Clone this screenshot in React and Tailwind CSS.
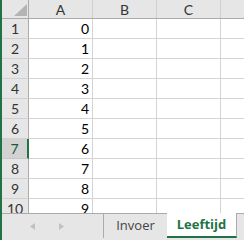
import React from 'react';

const cols = ['A', 'B', 'C', 'D'];
const rows = [0, 1, 2, 3, 4, 5, 6, 7, 8, 9];

const HeaderRow = () => (
  <div className="flex h-[19px] shrink-0 bg-[#e6e6e6] border-b border-[#ababab]">
    <div className="w-[27px] shrink-0 border-r border-[#ababab] relative">
      <svg className="absolute left-[12px] top-[4px]" width="13" height="12" viewBox="0 0 13 12">
        <polygon points="0,12 13,12 13,0" fill="#b4b4b4" />
      </svg>
    </div>
    {cols.map((c) => (
      <div
        key={c}
        className="w-[64px] shrink-0 border-r border-[#d0d0d0] flex items-center justify-center text-[14px] text-[#333]"
      >
        {c}
      </div>
    ))}
  </div>
);

const Row = ({ n, value, selected }) => (
  <div className="flex h-[20px] shrink-0">
    <div
      className={
        selected
          ? 'w-[27px] shrink-0 bg-[#d2d2d2] border-b border-[#c6c6c6] border-r-2 border-r-[#217346] flex items-center justify-center text-[14px] text-[#1e5a38]'
          : 'w-[27px] shrink-0 bg-[#e6e6e6] border-b border-[#d0d0d0] border-r border-r-[#ababab] flex items-center justify-center text-[14px] text-[#333]'
      }
    >
      {n}
    </div>
    <div className="w-[64px] shrink-0 border-r border-b border-[#d4d4d4] flex items-center justify-end pr-[3px] text-[14px] text-black">
      {value}
    </div>
    <div className="w-[64px] shrink-0 border-r border-b border-[#d4d4d4]" />
    <div className="w-[64px] shrink-0 border-r border-b border-[#d4d4d4]" />
    <div className="w-[64px] shrink-0 border-r border-b border-[#d4d4d4]" />
  </div>
);

const TabBar = () => (
  <div className="flex h-[27px] shrink-0 bg-[#e6e6e6] font-['Open_Sans',sans-serif]">
    <div className="w-[101px] shrink-0 h-[25px] border-t border-[#ababab] flex items-center">
      <svg className="ml-[28px]" width="5" height="7" viewBox="0 0 5 7">
        <polygon points="5,0 5,7 0,3.5" fill="#c2c2c2" />
      </svg>
      <svg className="ml-[24px]" width="5" height="7" viewBox="0 0 5 7">
        <polygon points="0,0 0,7 5,3.5" fill="#c2c2c2" />
      </svg>
    </div>
    <div className="w-[64px] shrink-0 h-[25px] border-t border-l border-[#ababab] flex items-center justify-center text-[13px] text-[#444]">
      Invoer
    </div>
    <div className="w-[70px] shrink-0 h-[25px] bg-white border-r border-[#ababab] border-b-2 border-b-[#217346] flex items-center justify-center text-[13px] font-bold text-[#217346]">
      Leeftijd
    </div>
    <div className="flex-1 h-[25px] border-t border-[#ababab]" />
  </div>
);

export default function App() {
  return (
    <div className="w-[244px] h-[245px] flex bg-white overflow-hidden font-['Lato',sans-serif]">
      <div className="w-[2px] h-[240px] shrink-0 bg-[#217346]" />
      <div className="flex-1 flex flex-col min-w-0">
        <div className="h-[213px] shrink-0 flex flex-col overflow-hidden">
          <HeaderRow />
          {rows.map((v) => (
            <Row key={v} n={v + 1} value={v} selected={v === 6} />
          ))}
        </div>
        <TabBar />
      </div>
    </div>
  );
}
